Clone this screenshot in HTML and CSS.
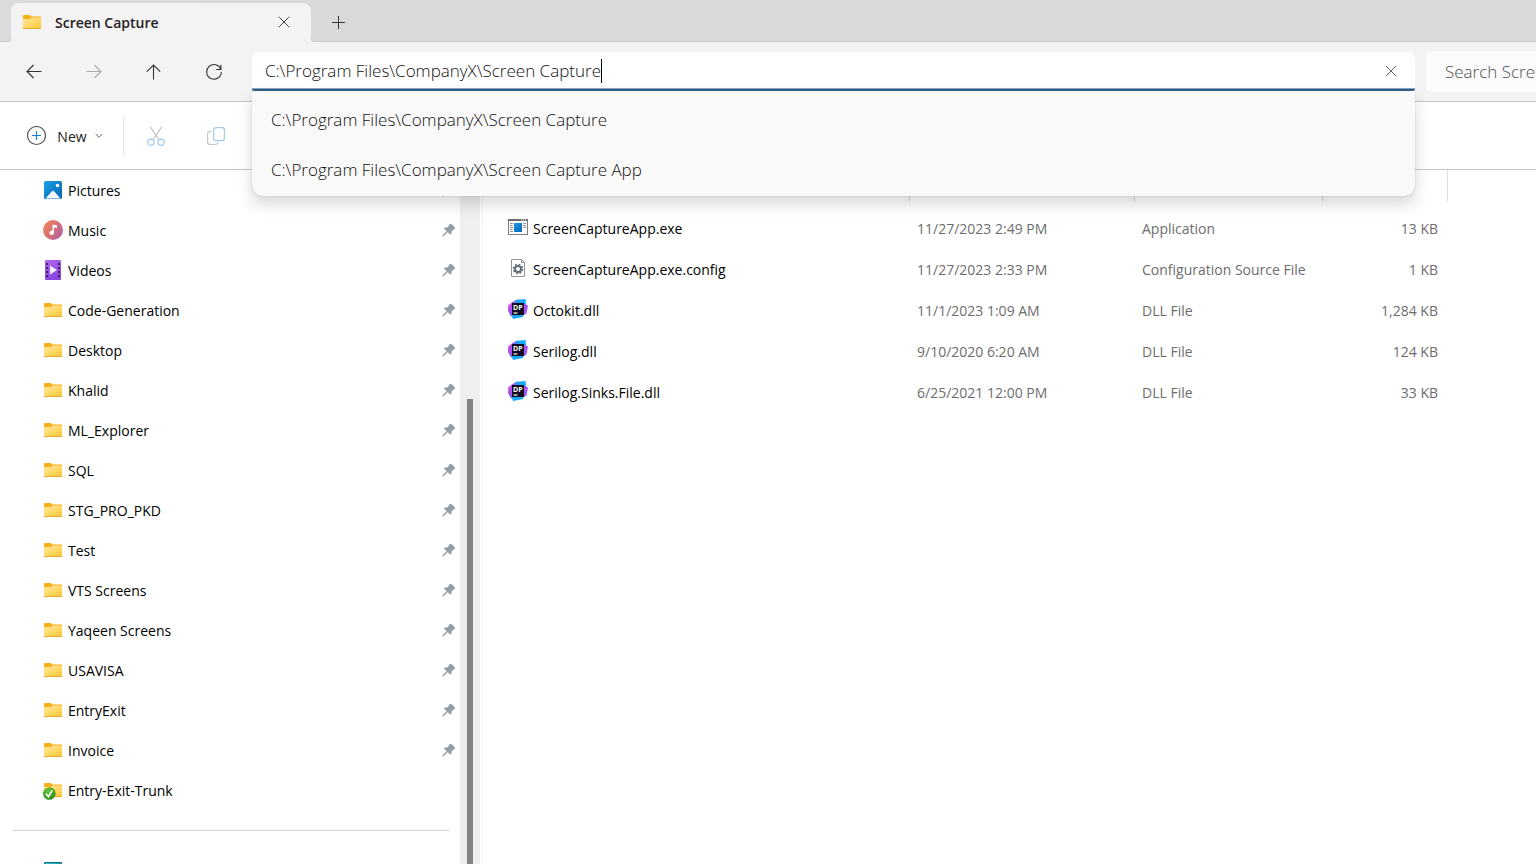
FILE: index.html
```html
<!DOCTYPE html>
<html lang="en">
<head>
<meta charset="utf-8">
<title>Screen Capture</title>
<link rel="stylesheet" href="styles.css">
</head>
<body>
<svg class="sprite" aria-hidden="true">
  <defs>
    <linearGradient id="gFolder" x1="0" y1="0" x2="1" y2="1"><stop offset="0" stop-color="#ffeaa6"/><stop offset="1" stop-color="#fdc832"/></linearGradient>
    <linearGradient id="gPic" x1="0" y1="0" x2="1" y2="1"><stop offset="0" stop-color="#1ba0e6"/><stop offset="1" stop-color="#0a63b4"/></linearGradient>
    <linearGradient id="gMusic" x1="0" y1="0.2" x2="1" y2="0.9"><stop offset="0" stop-color="#ef8557"/><stop offset="0.5" stop-color="#d56f76"/><stop offset="1" stop-color="#a85fb6"/></linearGradient>
    <linearGradient id="gVideo" x1="0" y1="0" x2="0.4" y2="1"><stop offset="0" stop-color="#b565ee"/><stop offset="1" stop-color="#8746de"/></linearGradient>
    <linearGradient id="gPc" x1="0" y1="0" x2="1" y2="0"><stop offset="0" stop-color="#35c2d0"/><stop offset="1" stop-color="#1c91b4"/></linearGradient>
    <linearGradient id="gExe" x1="0" y1="0" x2="1" y2="1"><stop offset="0" stop-color="#1c9ce4"/><stop offset="1" stop-color="#0a66b8"/></linearGradient>
    <linearGradient id="gDpA" x1="0" y1="0" x2="0.2" y2="1"><stop offset="0" stop-color="#e24be8"/><stop offset="1" stop-color="#8a4ff0"/></linearGradient>
    <linearGradient id="gDpB" x1="0" y1="0" x2="1" y2="0"><stop offset="0" stop-color="#c44cf0"/><stop offset="0.5" stop-color="#1aa6f8"/><stop offset="1" stop-color="#13b4ff"/></linearGradient>
    <radialGradient id="gOk" cx="0.4" cy="0.3" r="0.8"><stop offset="0" stop-color="#6cc63a"/><stop offset="1" stop-color="#1f8a12"/></radialGradient>
  </defs>
  <symbol id="folder" viewBox="0 0 20 20">
    <path d="M1 4.200Q1 3 2 3h5.200q.8 0 1.200.6L9.500 4.500H18.300q.7 0 .7.7V10H1z" fill="#f5b01c"/>
    <path d="M1 7h6.500q.7 0 1.200-.5L9.600 5.500H18.300q.7 0 .7.7V16H1z" fill="url(#gFolder)"/>
    <path d="M1 16h18v.3q0 .7-.6.7H1.600q-.6 0-.6-.7z" fill="#e9a825"/>
  </symbol>
  <symbol id="folder-ok" viewBox="0 0 20 20">
    <use href="#folder" width="20" height="20"/>
    <circle cx="6.300" cy="13.500" r="6.300" fill="url(#gOk)"/>
    <path d="M3 13.800 5.500 16.500 9.300 10.400" fill="none" stroke="#fff" stroke-width="1.700"/>
  </symbol>
  <symbol id="pictures" viewBox="0 0 20 20">
    <rect x="1" y="1" width="18" height="18" rx="1.500" fill="url(#gPic)"/>
    <path d="M2.500 18.500 9 11.300q1-1 2 0l6.500 7.200z" fill="#f4faff"/>
    <circle cx="14.500" cy="5.500" r="1.700" fill="#fff"/>
  </symbol>
  <symbol id="music" viewBox="0 0 20 20">
    <circle cx="10" cy="10" r="10" fill="url(#gMusic)"/>
    <path d="M9.500 4.500 14 5.300V8l-3-.5v5.300a2.200 2.200 0 1 1-1.500-2.100z" fill="#fff"/>
  </symbol>
  <symbol id="videos" viewBox="0 0 20 20">
    <rect x="2" y="0" width="16" height="20" rx="1" fill="url(#gVideo)"/>
    <path d="M4 3v15M16 3v15" stroke="#3f2165" stroke-width="2" stroke-dasharray="2 2"/>
    <path d="M7 5.500 14 10l-7 4.500z" fill="#f5effc"/>
  </symbol>
  <symbol id="pc" viewBox="0 0 20 20">
    <rect x="1" y="2" width="18" height="14" rx="1" fill="#16707f"/>
    <rect x="2" y="3" width="16" height="12" fill="url(#gPc)"/>
  </symbol>
  <symbol id="pin" viewBox="0 0 14 14">
    <path d="M7.200 1.700Q8.400.3 9.600 1.200L12.500 4Q13.600 5.200 12.500 6.100L9.800 8Q9.700 9.800 9.400 10.800 8.700 12 7.700 11.100L5.700 9.200 1.200 13.600.3 13.500.5 12.600 4.600 8.100 2.400 6Q1.600 4.900 2.800 4.500L5.800 4.200z" fill="#929da4"/>
  </symbol>
  <symbol id="exe" viewBox="0 0 20 20">
    <rect x=".5" y="2.500" width="19" height="15" fill="#fff" stroke="#777d80"/>
    <path d="M0 3h20" stroke="#6d6d6d" stroke-width="2"/>
    <path d="M13 3h1M15 3h1M17 3h1" stroke="#fff"/>
    <path d="M2 6.500h3M2 8.500h2.500M2 10.500h3M2 12.500h2.500M2 14.500h3M15.500 6.500h2.500M15 8.500h3M15.500 10.500h2.500" stroke="#8d8d8d"/>
    <rect x="6" y="6" width="8" height="9" fill="url(#gExe)"/>
  </symbol>
  <symbol id="config" viewBox="0 0 20 20">
    <path d="M3.500 1.500h10l3 3v14h-13z" fill="#fff" stroke="#8e9699"/>
    <path d="M13.500 1.500v3h3" fill="none" stroke="#8e9699"/>
    <circle cx="10" cy="11" r="4.500" fill="none" stroke="#5c6f78" stroke-width="1.600" stroke-dasharray="1.800 1.734"/>
    <circle cx="10" cy="11" r="3" fill="none" stroke="#5c6f78" stroke-width="2"/>
  </symbol>
  <symbol id="dll" viewBox="0 0 20 20">
    <path d="M.2 6.500 5 2.500 10 5v10l-7 2.500L0 12z" fill="url(#gDpA)"/>
    <path d="M3 4.500 8 .8 17.500 0 18.200 6 8 8z" fill="url(#gDpB)"/>
    <path d="M15 4 20 6.500 18.500 14.500 14 17z" fill="#a457f5"/>
    <path d="M3 15 16 12.500 15 18 5 20z" fill="#18a9fb"/>
    <rect x="4" y="4" width="12" height="12" fill="#120a20"/>
    <path d="M5.500 14H9.500" stroke="#fff" stroke-width="1.200"/>
  </symbol>
  <symbol id="close" viewBox="0 0 12 12"><path d="M.8.8 11.200 11.200M11.200.8.8 11.200" fill="none" stroke="currentColor"/></symbol>
</svg>

<div class="window">
  <header class="tabstrip">
    <div class="tab">
      <svg class="icon"><use href="#folder"/></svg>
      <span class="tab-title">Screen Capture</span>
      <button class="tab-close" aria-label="Close tab"><svg class="x-icon"><use href="#close"/></svg></button>
    </div>
    <button class="new-tab" aria-label="New tab"><svg width="13" height="13" viewBox="0 0 13 13"><path d="M6.500 0v13M0 6.500h13" stroke="#333"/></svg></button>
  </header>

  <nav class="navbar">
    <div class="nav-buttons">
      <button aria-label="Back"><svg width="16" height="16" viewBox="0 0 16 16"><path d="M15.500 7.500H1M7.500 1 1 7.500 7.500 14"/></svg></button>
      <button aria-label="Forward" disabled><svg width="16" height="16" viewBox="0 0 16 16"><path d="M.5 7.500H15M8.500 1 15 7.500 8.500 14"/></svg></button>
      <button aria-label="Up"><svg width="16" height="16" viewBox="0 0 16 16"><path d="M7.500 15.500V1M.8 7.700 7.500 1l6.700 6.700"/></svg></button>
      <button aria-label="Refresh"><svg width="16" height="16" viewBox="0 0 16 16"><path d="M14.900 5.500A7.300 7.300 0 1 0 15.300 8M14.900.8v4.700h-4.700"/></svg></button>
    </div>
    <div class="address">
      <div class="address-box">
        <input class="address-input" type="text" aria-label="Address" value="C:\Program Files\CompanyX\Screen Capture">
        <span class="caret"></span>
        <button class="clear" aria-label="Clear"><svg class="x-icon"><use href="#close"/></svg></button>
      </div>
      <div class="suggestions">
        <button>C:\Program Files\CompanyX\Screen Capture</button>
        <button>C:\Program Files\CompanyX\Screen Capture App</button>
      </div>
    </div>
    <input class="search" type="text" aria-label="Search" placeholder="Search Screen Capture">
  </nav>

  <div class="commands">
    <button class="new"><svg width="20" height="20" viewBox="0 0 20 20"><circle cx="10.500" cy="9.500" r="9" fill="none" stroke="#555" stroke-width="1.200"/><path d="M10.500 5v9M6 9.500h9" stroke="#1b7fce" stroke-width="1.200"/></svg>
      <span>New</span>
      <svg width="8" height="6" viewBox="0 0 8 6"><path d="m.7 1 3.300 3.300L7.300 1" fill="none" stroke="#666"/></svg></button>
    <span class="divider"></span>
    <button class="tool" aria-label="Cut" disabled><svg width="20" height="20" viewBox="0 0 20 20" fill="none"><path d="M4 .5 12.800 13.500M16 .5 7.200 13.500" stroke="#bdbdbd" stroke-width="1.100"/><circle cx="4.900" cy="16.200" r="3.100" stroke="#9fcbed" stroke-width="1.200"/><circle cx="15.100" cy="16.200" r="3.100" stroke="#9fcbed" stroke-width="1.200"/></svg></button>
    <button class="tool" aria-label="Copy" disabled><svg width="20" height="20" viewBox="0 0 20 20" fill="none"><path d="M5.500 5.500H4.300Q1.600 5.500 1.600 8.200V16Q1.600 18.500 4.300 18.500H9Q11.500 18.500 12 16.500" stroke="#c4c4c4" stroke-width="1.200"/><rect x="7.600" y="1.600" width="10.800" height="13" rx="2.400" stroke="#9fcbed" stroke-width="1.200"/></svg></button>
  </div>

  <div class="content">
    <aside class="sidebar">
      <a href="#"><svg class="icon"><use href="#pictures"/></svg><span>Pictures</span><svg class="pin"><use href="#pin"/></svg></a>
      <a href="#"><svg class="icon"><use href="#music"/></svg><span>Music</span><svg class="pin"><use href="#pin"/></svg></a>
      <a href="#"><svg class="icon"><use href="#videos"/></svg><span>Videos</span><svg class="pin"><use href="#pin"/></svg></a>
      <a href="#"><svg class="icon"><use href="#folder"/></svg><span>Code-Generation</span><svg class="pin"><use href="#pin"/></svg></a>
      <a href="#"><svg class="icon"><use href="#folder"/></svg><span>Desktop</span><svg class="pin"><use href="#pin"/></svg></a>
      <a href="#"><svg class="icon"><use href="#folder"/></svg><span>Khalid</span><svg class="pin"><use href="#pin"/></svg></a>
      <a href="#"><svg class="icon"><use href="#folder"/></svg><span>ML_Explorer</span><svg class="pin"><use href="#pin"/></svg></a>
      <a href="#"><svg class="icon"><use href="#folder"/></svg><span>SQL</span><svg class="pin"><use href="#pin"/></svg></a>
      <a href="#"><svg class="icon"><use href="#folder"/></svg><span>STG_PRO_PKD</span><svg class="pin"><use href="#pin"/></svg></a>
      <a href="#"><svg class="icon"><use href="#folder"/></svg><span>Test</span><svg class="pin"><use href="#pin"/></svg></a>
      <a href="#"><svg class="icon"><use href="#folder"/></svg><span>VTS Screens</span><svg class="pin"><use href="#pin"/></svg></a>
      <a href="#"><svg class="icon"><use href="#folder"/></svg><span>Yaqeen Screens</span><svg class="pin"><use href="#pin"/></svg></a>
      <a href="#"><svg class="icon"><use href="#folder"/></svg><span>USAVISA</span><svg class="pin"><use href="#pin"/></svg></a>
      <a href="#"><svg class="icon"><use href="#folder"/></svg><span>EntryExit</span><svg class="pin"><use href="#pin"/></svg></a>
      <a href="#"><svg class="icon"><use href="#folder"/></svg><span>Invoice</span><svg class="pin"><use href="#pin"/></svg></a>
      <a href="#"><svg class="icon"><use href="#folder-ok"/></svg><span>Entry-Exit-Trunk</span></a>
      <hr>
      <a href="#" aria-label="This PC"><svg class="icon"><use href="#pc"/></svg></a>
    </aside>
    <div class="scrollbar"><div class="thumb"></div></div>
    <main class="files">
      <table>
        <colgroup><col class="c-name"><col class="c-date"><col class="c-type"><col class="c-size"></colgroup>
        <thead><tr><th aria-label="Name"></th><th aria-label="Date modified"></th><th aria-label="Type"></th><th aria-label="Size"></th></tr></thead>
        <tbody>
          <tr><td><div class="file"><svg class="icon"><use href="#exe"/></svg>ScreenCaptureApp.exe</div></td><td>11/27/2023 2:49 PM</td><td>Application</td><td>13 KB</td></tr>
          <tr><td><div class="file"><svg class="icon"><use href="#config"/></svg>ScreenCaptureApp.exe.config</div></td><td>11/27/2023 2:33 PM</td><td>Configuration Source File</td><td>1 KB</td></tr>
          <tr><td><div class="file"><svg class="icon"><use href="#dll"/><text x="5" y="10.500" class="dll-text">DP</text></svg>Octokit.dll</div></td><td>11/1/2023 1:09 AM</td><td>DLL File</td><td>1,284 KB</td></tr>
          <tr><td><div class="file"><svg class="icon"><use href="#dll"/><text x="5" y="10.500" class="dll-text">DP</text></svg>Serilog.dll</div></td><td>9/10/2020 6:20 AM</td><td>DLL File</td><td>124 KB</td></tr>
          <tr><td><div class="file"><svg class="icon"><use href="#dll"/><text x="5" y="10.500" class="dll-text">DP</text></svg>Serilog.Sinks.File.dll</div></td><td>6/25/2021 12:00 PM</td><td>DLL File</td><td>33 KB</td></tr>
        </tbody>
      </table>
    </main>
  </div>
</div>
</body>
</html>
```

FILE: styles.css
```css
* { box-sizing: border-box; }

body {
  margin: 0;
  font: 14px/20px "Segoe UI", "Open Sans", "Noto Sans", sans-serif;
  color: #111;
  background: #fff;
}

button, input { font: inherit; color: inherit; border: 0; padding: 0; background: none; outline: 0; }
button { display: flex; align-items: center; justify-content: center; }
svg { display: block; flex: none; }

.sprite { position: absolute; width: 0; height: 0; }
.icon { width: 20px; height: 20px; }
.pin { width: 14px; height: 14px; margin-left: auto; }
.x-icon { width: 12px; height: 12px; }
.dll-text { font: 700 7px "Open Sans", sans-serif; fill: #fff; }

.window { display: flex; flex-direction: column; height: 100vh; overflow: hidden; }

/* Tabs */
.tabstrip {
  display: flex;
  flex: none;
  height: 42px;
  padding: 3px 0 0 11px;
  background: linear-gradient(90deg, #d9dbdc, #d9d9d9 320px);
  box-shadow: inset 0 -1px #c8c8c8;
}
.tab {
  position: relative;
  display: flex;
  align-items: center;
  width: 300px;
  padding: 0 21px 1px 11px;
  border-radius: 8px 8px 0 0;
  background: #f3f3f3;
}
.tab::before, .tab::after {
  content: "";
  position: absolute;
  bottom: 0;
  width: 4px;
  height: 4px;
}
.tab::before { right: 100%; background: radial-gradient(circle at 0 0, #d9dbdc 3px, #c8c8c8 4px, #f3f3f3 5px); }
.tab::after { left: 100%; background: radial-gradient(circle at 100% 0, #d9d9d9 3px, #c8c8c8 4px, #f3f3f3 5px); }
.tab-title { margin-left: 13px; padding-top: 2px; font-weight: 600; color: #222; }
.tab-close { margin-left: auto; color: #444; }
.new-tab { width: 55px; }

/* Navigation */
.navbar {
  display: flex;
  flex: none;
  align-items: center;
  height: 60px;
  padding-left: 4px;
  background: #f3f3f3;
  border-bottom: 1px solid #c6c6c6;
}
.nav-buttons { display: flex; width: 248px; }
.nav-buttons button { width: 60px; height: 40px; }
.nav-buttons path { fill: none; stroke: #333; stroke-width: 1.1; }
.nav-buttons button:disabled path { stroke: #aaa; }

.address { position: relative; flex: 1; min-width: 0; font-size: 17px; font-weight: 340; }
.address-box {
  display: flex;
  align-items: center;
  height: 39px;
  padding: 0 18px 0 13px;
  background: #fff;
  border-radius: 5px 5px 2px 2px;
  border-bottom: 2px solid #38618f;
  box-shadow: inset 0 -1px #8ba2bc;
}
.address-input { field-sizing: content; height: 36px; color: #111; }
.caret { width: 1px; height: 24px; background: #000; }
.clear { margin-left: auto; color: #666; }
.suggestions {
  position: absolute;
  z-index: 2;
  top: 100%;
  left: 0;
  right: 0;
  padding: 4px 0 1px;
  background: #f9f9f9;
  border-radius: 0 0 10px 10px;
  box-shadow: 0 0 1px rgba(0, 0, 0, .35), 0 8px 16px rgba(0, 0, 0, .16);
  color: #111;
}
.suggestions button { justify-content: flex-start; width: 100%; height: 50px; padding-left: 19px; }
.search {
  flex: none;
  width: 110px;
  height: 41px;
  margin-left: 11px;
  padding-left: 19px;
  font-size: 17px;
  font-weight: 340;
  background: #fbfbfb;
  border-radius: 5px 0 0 5px;
}
.search::placeholder { color: #505050; opacity: 1; }

/* Commands */
.commands {
  display: flex;
  flex: none;
  align-items: center;
  height: 68px;
  padding-left: 26px;
  border-bottom: 1px solid #c6c6c6;
}
.new { width: 77px; color: #222; }
.new span { padding-top: 2px; margin: 0 8px 0 11px; }
.divider { width: 1px; height: 40px; margin: 0 2px 0 20px; background: #e5e5e5; }
.tool { width: 60px; height: 40px; }

/* Body */
.content { display: flex; flex: 1; min-height: 0; }
.sidebar { width: 460px; overflow: hidden; }
.sidebar a {
  display: flex;
  align-items: center;
  gap: 5px;
  height: 40px;
  padding: 0 4px 0 43px;
  color: #000;
  text-decoration: none;
}
.sidebar a span { padding-top: 2px; }
.sidebar hr { height: 1px; margin: 20px 11px 19px 13px; border: 0; background: #d2d2d2; }
.scrollbar { width: 20px; padding: 229px 7px 0; background: #efefef; }
.thumb { height: 100%; background: #858585; }

.files { flex: 1; min-width: 0; margin-left: 2px; border-left: 1px solid #f3f3f3; }
table { width: 965px; border-collapse: separate; border-spacing: 0; table-layout: fixed; }
.c-name { width: 427px; }
.c-date { width: 225px; }
.c-type { width: 188px; }
.c-size { width: 125px; }
th { height: 32px; padding: 0; border-right: 1px solid #dedede; }
thead::after { content: ""; display: block; height: 6px; }
td { height: 41px; padding: 0 0 0 7px; color: #6d6d6d; white-space: nowrap; }
td:first-child { padding-left: 25px; color: #000; }
td:last-child { padding-right: 10px; text-align: right; }
.file { display: flex; align-items: center; gap: 5px; }
.file .icon { margin-bottom: 4px; }
```
